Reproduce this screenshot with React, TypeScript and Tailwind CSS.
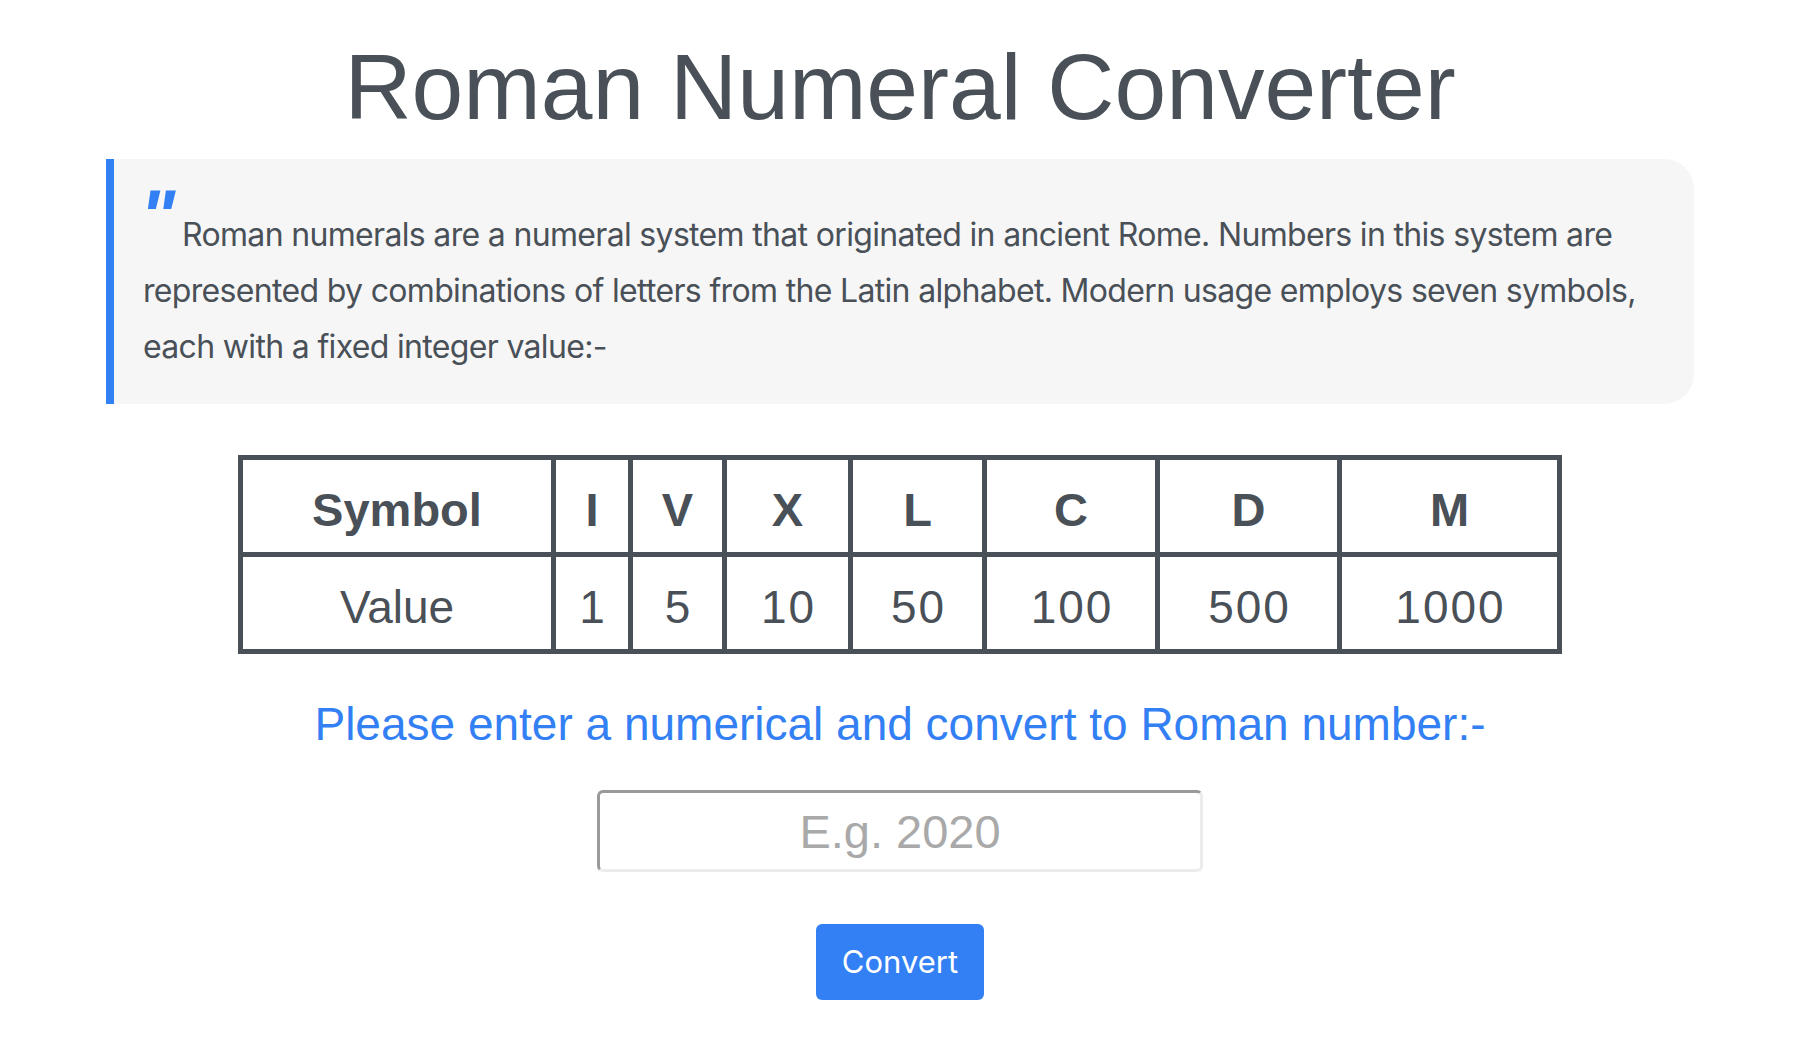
import React from "react";

const headers = ["Symbol", "I", "V", "X", "L", "C", "D", "M"];
const values = ["Value", "1", "5", "10", "50", "100", "500", "1000"];

export default function App() {
  return (
    <div className="min-h-[1056px] bg-white">
      <div className="w-[1800px] flex flex-col items-center text-[#495057] font-['Liberation_Sans',Arial,sans-serif]">
        <h1 className="mt-[41px] text-[93px] leading-none font-normal text-center">
          Roman Numeral Converter
        </h1>

        <blockquote className="relative mt-[25px] w-[1588px] bg-[#f6f6f6] border-l-[8px] border-[#3380f4] rounded-r-[30px] pl-[29px] pr-[30px] pt-[48px] pb-[29px]">
          <span className="absolute left-[26px] top-[21px] text-[74px] leading-none font-bold italic text-[#3380f4] font-['Liberation_Sans',Arial,sans-serif] select-none">
            "
          </span>
          <p className="indent-[39px] text-[32px] leading-[56px] tracking-[-0.67px] text-[#495057] font-['Inter','Noto_Sans',sans-serif]">
            Roman numerals are a numeral system that originated in ancient Rome. Numbers in this system are represented by combinations of letters from the Latin alphabet. Modern usage employs seven symbols, each with a fixed integer value:-
          </p>
        </blockquote>

        <div className="mt-[51px] grid grid-cols-[308px_72px_89px_121px_129px_168px_177px_215px] grid-rows-[92px_92px] gap-[5px] p-[5px] bg-[#495057]">
          {headers.map((h) => (
            <div key={h} className="bg-white flex items-center justify-center pt-[7px] text-[47px] leading-none font-bold text-[#495057]">
              {h}
            </div>
          ))}
          {values.map((v, i) => (
            <div
              key={v}
              className={
                i === 0
                  ? "bg-white flex items-center justify-center pt-[7px] text-[46px] leading-none font-normal text-[#495057]"
                  : "bg-white flex items-center justify-center pt-[7px] pl-[2px] text-[46px] leading-none font-normal tracking-[2px] text-[#495057]"
              }
            >
              {v}
            </div>
          ))}
        </div>

        <h2 className="mt-[47px] text-[46px] leading-none font-normal text-[#3380f4] text-center">
          Please enter a numerical and convert to Roman number:-
        </h2>

        <input
          type="text"
          placeholder="E.g. 2020"
          className="mt-[43px] w-[606px] h-[82px] bg-white text-center text-[47px] text-[#495057] placeholder:text-[#a9a9a9] border-[3px] border-t-[#9a9a9a] border-l-[#9a9a9a] border-r-[#ececec] border-b-[#ececec] rounded-[6px] outline-none font-['Liberation_Sans',Arial,sans-serif]"
        />

        <button
          type="button"
          className="mt-[52px] w-[168px] h-[76px] rounded-[6px] bg-[#3380f4] text-white text-[31px] font-['Inter','Noto_Sans',sans-serif] flex items-center justify-center"
        >
          Convert
        </button>
      </div>
    </div>
  );
}
